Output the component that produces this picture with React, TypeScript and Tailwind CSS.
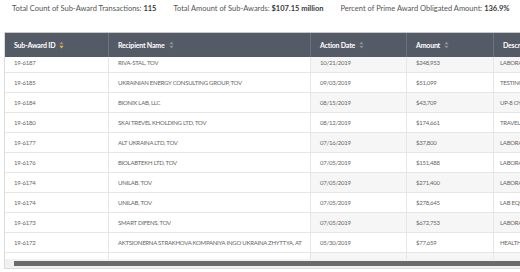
const rows = [
  { id: '19-6187', name: 'RIVA-STAL, TOV', date: '10/21/2019', amount: '$248,953', desc: 'LABORATORY EQUIPMENT' },
  { id: '19-6185', name: 'UKRAINIAN ENERGY CONSULTING GROUP, TOV', date: '09/03/2019', amount: '$51,099', desc: 'TESTING SERVICES' },
  { id: '19-6184', name: 'BIONIX LAB, LLC', date: '08/15/2019', amount: '$43,709', desc: 'UP-8 OYSTER' },
  { id: '19-6180', name: 'SKAI TREVEL KHOLDING LTD, TOV', date: '08/12/2019', amount: '$174,661', desc: 'TRAVEL SERVICES' },
  { id: '19-6177', name: 'ALT UKRAINA LTD, TOV', date: '07/16/2019', amount: '$37,800', desc: 'LABORATORY SUPPLIES' },
  { id: '19-6176', name: 'BIOLABTEKH LTD, TOV', date: '07/05/2019', amount: '$151,488', desc: 'LABORATORY SUPPLIES' },
  { id: '19-6174', name: 'UNILAB, TOV', date: '07/05/2019', amount: '$271,400', desc: 'LABORATORY SUPPLIES' },
  { id: '19-6174', name: 'UNILAB, TOV', date: '07/05/2019', amount: '$278,645', desc: 'LAB EQUIPMENT' },
  { id: '19-6173', name: 'SMART DIFENS, TOV', date: '07/05/2019', amount: '$672,753', desc: 'LABORATORY SUPPLIES' },
  { id: '19-6172', name: 'AKTSIONERNA STRAKHOVA KOMPANIYA INGO UKRAINA ZHYTTYA, AT', date: '05/30/2019', amount: '$77,659', desc: 'HEALTH INSURANCE' },
  { id: '', name: '', date: '', amount: '', desc: '' },
]

const SortIcon = ({ active }: { active?: boolean }) => (
  <svg width="5" height="8" viewBox="0 0 5 8" className="ml-[4px] shrink-0">
    <path d="M2.5 0.5 L4.6 3.3 L0.4 3.3 Z" fill="#8b9099" />
    <path d="M2.5 7.5 L4.6 4.7 L0.4 4.7 Z" fill={active ? '#f4b626' : '#8b9099'} />
  </svg>
)

const headers = [
  { label: 'Sub-Award ID', w: 'w-[103px]', active: true },
  { label: 'Recipient Name', w: 'w-[202px]' },
  { label: 'Action Date', w: 'w-[96px]' },
  { label: 'Amount', w: 'w-[87px]' },
  { label: 'Description', w: 'w-[160px]' },
]

const App = () => {
  return (
    <div className="w-[520px] h-[272px] bg-white overflow-hidden text-[#555] font-['Lato','Liberation_Sans',sans-serif]">

      {/* Summary */}
      <div className="flex h-[17px] items-center pl-[12px] text-[7.5px] gap-[17px] whitespace-nowrap">
        <span>Total Count of Sub-Award Transactions: <b className="text-[#3a3a3a]">115</b></span>
        <span>Total Amount of Sub-Awards: <b className="text-[#3a3a3a]">$107.15 million</b></span>
        <span>Percent of Prime Award Obligated Amount: <b className="text-[#3a3a3a]">136.9%</b></span>
      </div>

      {/* Table */}
      <div className="ml-[4px] mt-[15px] border-l border-b border-[#dcdcdc] overflow-hidden">

        {/* Header */}
        <div className="flex h-[25px] bg-[#555b66] border-t border-[#c8c8c8]">
          {headers.map((h, i) => (
            <div
              key={i}
              className={`${h.w} shrink-0 flex items-center pl-[9px] text-[7px] tracking-[-0.2px] font-bold text-white whitespace-nowrap overflow-hidden ${i > 0 ? 'border-l border-[#6e747e]' : ''}`}
            >
              {h.label}
              {h.label !== 'Description' && <SortIcon active={h.active} />}
            </div>
          ))}
        </div>

        {/* Body */}
        <div className="h-[202px] overflow-hidden">
          <div className="-mt-[4px]">
            {rows.map((r, i) => {
              const stripe = i % 2 === 0 ? 'bg-[#f6f6f6]' : 'bg-white'
              return (
                <div key={i} className="flex h-[20px] border-b border-[#e6e6e6] text-[6px] tracking-[-0.25px] text-[#666] whitespace-nowrap">
                  <div className="w-[103px] shrink-0 flex items-center pl-[9px] bg-white overflow-hidden">{r.id}</div>
                  <div className="w-[202px] shrink-0 flex items-center pl-[9px] bg-white border-l border-[#e6e6e6] overflow-hidden">{r.name}</div>
                  <div className={`w-[96px] shrink-0 flex items-center pl-[9px] border-l border-[#e6e6e6] overflow-hidden ${stripe}`}>{r.date}</div>
                  <div className={`w-[87px] shrink-0 flex items-center pl-[9px] border-l border-[#e6e6e6] overflow-hidden ${stripe}`}>{r.amount}</div>
                  <div className={`w-[160px] shrink-0 flex items-center pl-[6px] border-l border-[#e6e6e6] overflow-hidden ${stripe}`}>{r.desc}</div>
                </div>
              )
            })}
          </div>
        </div>

        {/* Scrollbar */}
        <div className="h-[9px] bg-[#f1f1f1] flex items-center pl-[9px]">
          <div className="h-[5px] flex-1 bg-[#6a6a6a]" />
        </div>
      </div>
    </div>
  )
}

export default App
